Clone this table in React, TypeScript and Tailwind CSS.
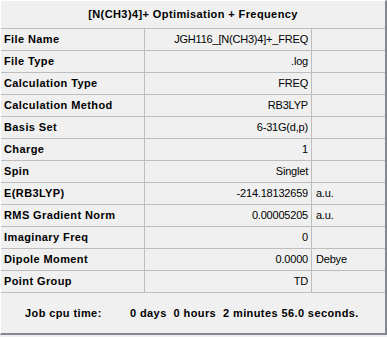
import React from "react";

const rows: [string, string, string][] = [
  ["File Name", "JGH116_[N(CH3)4]+_FREQ", ""],
  ["File Type", ".log", ""],
  ["Calculation Type", "FREQ", ""],
  ["Calculation Method", "RB3LYP", ""],
  ["Basis Set", "6-31G(d,p)", ""],
  ["Charge", "1", ""],
  ["Spin", "Singlet", ""],
  ["E(RB3LYP)", "-214.18132659", "a.u."],
  ["RMS Gradient Norm", "0.00005205", "a.u."],
  ["Imaginary Freq", "0", ""],
  ["Dipole Moment", "0.0000", "Debye"],
  ["Point Group", "TD", ""],
];

export default function App() {
  return (
    <div
      className="w-[387px] h-[337px] bg-[#f0f0f0] text-[11px] text-black"
      style={{ fontFamily: '"Liberation Sans", Arial, sans-serif' }}
    >
      <div className="w-[387px] h-[335px] flex flex-col border-t border-l border-white border-r-2 border-b-2 border-r-[#828790] border-b-[#828790]">
        {/* Title */}
        <div className="h-[28px] flex items-center justify-center font-bold tracking-[0.4px] border-b border-[#bdbdbd] shrink-0">
          [N(CH3)4]+ Optimisation + Frequency
        </div>
        {/* Property rows */}
        {rows.map(([label, value, unit]) => (
          <div key={label} className="h-[22px] flex border-b border-[#bdbdbd] shrink-0">
            <div className="w-[144px] flex items-center pl-[3px] font-bold tracking-[0.4px] border-r border-[#bdbdbd]">
              {label}
            </div>
            <div className="w-[167px] flex items-center justify-end pr-[3px] tracking-[-0.2px] border-r border-[#bdbdbd]">
              {value}
            </div>
            <div className="flex-1 flex items-center pl-[4px] tracking-[-0.2px]">{unit}</div>
          </div>
        ))}
        {/* Footer */}
        <div className="flex-1 flex items-center font-bold tracking-[0.4px] whitespace-pre">
          <span className="pl-[24px] w-[129px]">Job cpu time:</span>
          <span>0 days  0 hours  2 minutes 56.0 seconds.</span>
        </div>
      </div>
    </div>
  );
}
